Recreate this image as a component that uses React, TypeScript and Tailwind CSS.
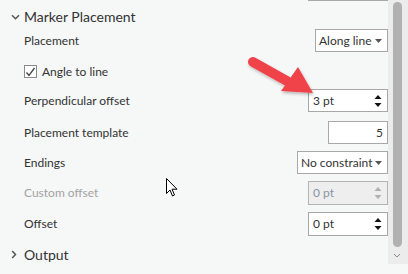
import React from 'react';

const font = { fontFamily: 'Lato, "Noto Sans", sans-serif' };

const Caret = () => (
  <svg width="7" height="4" viewBox="0 0 7 4" className="ml-auto mr-[2px] shrink-0">
    <path d="M0 0h7L3.5 4z" fill="#555" />
  </svg>
);

const Spin = ({ disabled }: { disabled?: boolean }) => (
  <svg width="8" height="14" viewBox="0 0 8 14" className="ml-auto shrink-0">
    <path d="M0.5 5L4 1l3.5 4z" fill={disabled ? '#b0b0b0' : '#111'} />
    <path d="M0.5 9L4 13l3.5-4z" fill={disabled ? '#b0b0b0' : '#111'} />
  </svg>
);

const Row = ({ label, children, className = '', muted }: { label: string; children?: React.ReactNode; className?: string; muted?: boolean }) => (
  <div className={`flex items-center h-[23px] pl-6 ${className}`}>
    <span className={`text-[12px] whitespace-nowrap ${muted ? 'text-[#a3a3a3]' : 'text-[#333]'}`}>{label}</span>
    <div className="ml-auto flex">{children}</div>
  </div>
);

const App = () => {
  return (
    <div className="relative w-[408px] h-[274px] bg-[#f6f7f7] overflow-hidden flex" style={font}>
      <div className="flex-1 flex flex-col relative">
        <div className="absolute top-0 left-[308px] w-[80px] border-t border-[#a8a8a8]" />

        <div className="flex items-center h-[23px] mt-[5px] pl-[11px]">
          <svg width="9" height="6" viewBox="0 0 9 6" className="mr-[4px]">
            <path d="M1 1.2l3.5 3.5L8 1.2" stroke="#555" strokeWidth="1.5" fill="none" />
          </svg>
          <span className="text-[14px] text-[#333] whitespace-nowrap">Marker Placement</span>
        </div>

        <Row label="Placement" className="mt-[1px]">
          <div className="w-[73px] h-[23px] border border-[#a8a8a8] bg-white flex items-center pl-[3px] pr-[3px] text-[12px] text-[#333] whitespace-nowrap">
            Along line
            <Caret />
          </div>
        </Row>

        <div className="flex items-center h-[23px] mt-[8px] pl-6">
          <div className="w-[13px] h-[13px] border border-[#8a8a8a] bg-white flex items-center justify-center">
            <svg width="11" height="10" viewBox="0 0 11 10">
              <path d="M1.5 5.5l2.5 3L9.5 1" stroke="#444" strokeWidth="1.3" fill="none" />
            </svg>
          </div>
          <span className="ml-[5px] text-[12px] text-[#333] whitespace-nowrap">Angle to line</span>
        </div>

        <Row label="Perpendicular offset" className="mt-[6px]">
          <div className="w-[80px] h-[23px] border border-[#a8a8a8] bg-white flex items-center pl-[4px] pr-[5px] text-[12px] text-[#333]">
            3 pt
            <Spin />
          </div>
        </Row>

        <Row label="Placement template" className="mt-[9px]">
          <div className="w-[60px] h-[23px] border border-[#a8a8a8] bg-white flex items-center justify-end pr-[4px] text-[12px] text-[#333]">
            5
          </div>
        </Row>

        <Row label="Endings" className="mt-[7px]">
          <div className="w-[91px] h-[23px] border border-[#a8a8a8] bg-white flex items-center pl-[3px] pr-[3px] text-[12px] text-[#333] whitespace-nowrap">
            No constraint
            <Caret />
          </div>
        </Row>

        <Row label="Custom offset" muted className="mt-[7px]">
          <div className="w-[80px] h-[24px] border border-[#b4b4b4] bg-[#eeeeee] flex items-center pl-[4px] pr-[5px] text-[12px] text-[#8a93a3]">
            0 pt
            <Spin disabled />
          </div>
        </Row>

        <Row label="Offset" className="mt-[8px]">
          <div className="w-[80px] h-[24px] border border-[#a8a8a8] bg-white flex items-center pl-[4px] pr-[5px] text-[12px] text-[#333]">
            0 pt
            <Spin />
          </div>
        </Row>

        <div className="flex items-center h-[23px] mt-[8px] pl-[11px]">
          <svg width="6" height="9" viewBox="0 0 6 9" className="mr-[7px]">
            <path d="M1.2 1l3.3 3.5L1.2 8" stroke="#555" strokeWidth="1.5" fill="none" />
          </svg>
          <span className="text-[14px] text-[#333]">Output</span>
        </div>
      </div>

      <div className="w-[20px] h-[264px] bg-[#ececec] flex flex-col items-center pt-[2px]">
        <div className="w-[9px] h-[245px] rounded-full bg-[#b1b1b1] ml-[-2px]" />
        <svg width="8" height="5" viewBox="0 0 8 5" className="mt-[6px] ml-[-2px]">
          <path d="M1 1l3 3 3-3" stroke="#888" strokeWidth="1" fill="none" />
        </svg>
      </div>

      {/* red annotation arrow */}
      <svg className="absolute left-0 top-0 pointer-events-none" width="408" height="274" viewBox="0 0 408 274">
        <defs>
          <filter id="sh" x="-20%" y="-20%" width="140%" height="140%">
            <feDropShadow dx="1" dy="2" stdDeviation="1.5" floodColor="#000" floodOpacity="0.25" />
          </filter>
        </defs>
        <g filter="url(#sh)">
          <path d="M253 62L287 81" stroke="#f0424a" strokeWidth="10" strokeLinecap="round" />
          <path d="M281 91L298 67L313 93z" fill="#f0424a" />
        </g>
      </svg>

      {/* mouse cursor */}
      <svg className="absolute left-[166px] top-[178px]" width="13" height="20" viewBox="0 0 13 20">
        <path d="M0.5 0.5v15l3.5-3.5 2.5 6 2-1-2.5-5.8h5z" fill="#fff" stroke="#000" strokeWidth="1" strokeLinejoin="round" />
      </svg>
    </div>
  );
};

export default App;
